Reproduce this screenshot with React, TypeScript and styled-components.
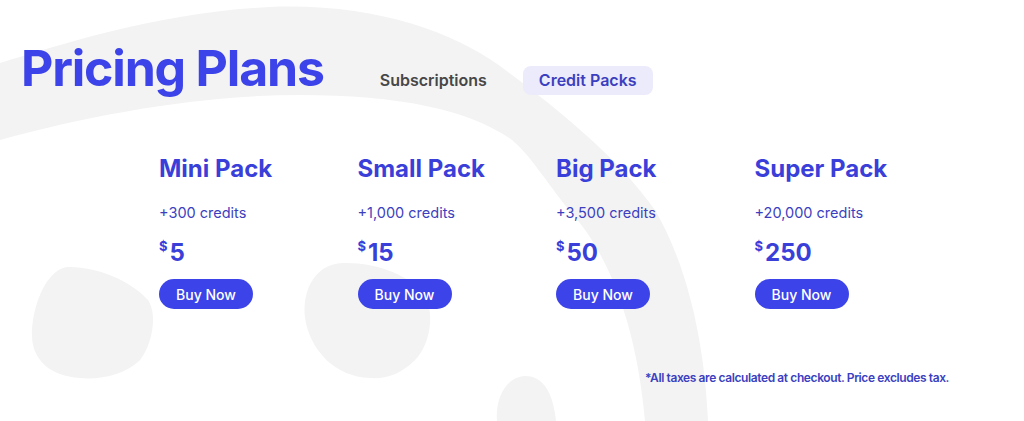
import React from "react";
import { createGlobalStyle, styled } from "styled-components";

const GlobalStyle = createGlobalStyle`
  html, body {
    margin: 0;
    padding: 0;
    background: #ffffff;
  }

  body {
    font-family: Inter, "Noto Sans", sans-serif;
    -webkit-font-smoothing: antialiased;
  }
`;

const Page = styled.div`
  position: relative;
  width: 1024px;
  height: 421px;
  overflow: hidden;
  background: #ffffff;
`;

const Backdrop = styled.svg`
  position: absolute;
  inset: 0;
  z-index: 0;

  path {
    fill: #f3f3f4;
  }
`;

const Content = styled.div`
  position: relative;
  z-index: 1;
  padding: 38px 0 0 21px;
`;

const Header = styled.header`
  display: flex;
  align-items: baseline;
  gap: 40px;
`;

const Title = styled.h1`
  margin: 0;
  font-size: 50px;
  line-height: 60px;
  font-weight: 700;
  letter-spacing: -1.2px;
  color: #3c43e8;
`;

const Tabs = styled.nav`
  display: flex;
  gap: 20px;
`;

const Tab = styled.button<{ $active?: boolean }>`
  border: 0;
  border-radius: 8px;
  padding: 6px 16px;
  font-family: inherit;
  font-size: 16px;
  line-height: 17px;
  font-weight: 600;
  cursor: pointer;
  color: ${(p) => (p.$active ? "#3b3fbf" : "#474747")};
  background: ${(p) => (p.$active ? "#ebebfc" : "transparent")};
`;

const PackGrid = styled.section`
  display: grid;
  grid-template-columns: repeat(4, 198.5px);
  margin: 56px 0 0 138px;
`;

const Pack = styled.div`
  display: flex;
  flex-direction: column;
  align-items: flex-start;
`;

const PackName = styled.h2`
  margin: 0;
  font-size: 24px;
  line-height: 30px;
  font-weight: 700;
  color: #3a3fd9;
`;

const Credits = styled.p`
  margin: 20px 0 0;
  font-size: 14.5px;
  line-height: 18px;
  color: #3b3fc0;
`;

const Price = styled.div`
  display: flex;
  align-items: flex-start;
  gap: 2px;
  margin-top: 17px;
  color: #3a3fd9;
  font-weight: 700;
`;

const Currency = styled.span`
  font-size: 13px;
  line-height: 14px;
`;

const Amount = styled.span`
  font-size: 24px;
  line-height: 24px;
  margin-top: 2px;
`;

const BuyButton = styled.button`
  margin-top: 14px;
  width: 94px;
  height: 30px;
  border: 0;
  border-radius: 15px;
  background: #3c43e8;
  color: #ffffff;
  font-family: inherit;
  font-size: 14px;
  font-weight: 500;
  cursor: pointer;
`;

const Note = styled.p`
  margin: 62px 75px 0 0;
  text-align: right;
  font-size: 12px;
  line-height: 14px;
  font-weight: 600;
  letter-spacing: -0.4px;
  color: #3b3fc0;
`;

const packs = [
  { name: "Mini Pack", credits: "+300 credits", price: "5" },
  { name: "Small Pack", credits: "+1,000 credits", price: "15" },
  { name: "Big Pack", credits: "+3,500 credits", price: "50" },
  { name: "Super Pack", credits: "+20,000 credits", price: "250" },
];

export default function App() {
  const [tab, setTab] = React.useState("credits");

  return (
    <Page>
      <GlobalStyle />
      <Backdrop width="1024" height="421" viewBox="0 0 1024 421">
        <path d="M0,63 C60,45 160,12 270,7 C370,3 450,30 500,66 C560,110 620,160 655,210 C690,270 705,350 708,421 L645,421 C638,340 615,260 569,210 C545,180 530,155 512,140 C470,110 400,95 300,95 C200,95 90,115 0,140 Z" />
        <path d="M67,267 C95,266 130,280 148,300 C158,315 152,345 140,360 C125,375 100,380 80,378 C50,376 33,360 32,337 C31,310 45,270 67,267 Z" />
        <path d="M343,263 C375,262 410,275 425,295 C435,315 430,345 415,360 C400,375 385,379 370,378 C335,377 310,350 305,318 C302,290 315,264 343,263 Z" />
        <path d="M497,421 C495,400 505,377 525,376 C545,376 553,395 556,421 Z" />
      </Backdrop>
      <Content>
        <Header>
          <Title>Pricing Plans</Title>
          <Tabs>
            <Tab $active={tab === "subs"} onClick={() => setTab("subs")}>
              Subscriptions
            </Tab>
            <Tab $active={tab === "credits"} onClick={() => setTab("credits")}>
              Credit Packs
            </Tab>
          </Tabs>
        </Header>
        <PackGrid>
          {packs.map((pack) => (
            <Pack key={pack.name}>
              <PackName>{pack.name}</PackName>
              <Credits>{pack.credits}</Credits>
              <Price>
                <Currency>$</Currency>
                <Amount>{pack.price}</Amount>
              </Price>
              <BuyButton>Buy Now</BuyButton>
            </Pack>
          ))}
        </PackGrid>
        <Note>*All taxes are calculated at checkout. Price excludes tax.</Note>
      </Content>
    </Page>
  );
}
